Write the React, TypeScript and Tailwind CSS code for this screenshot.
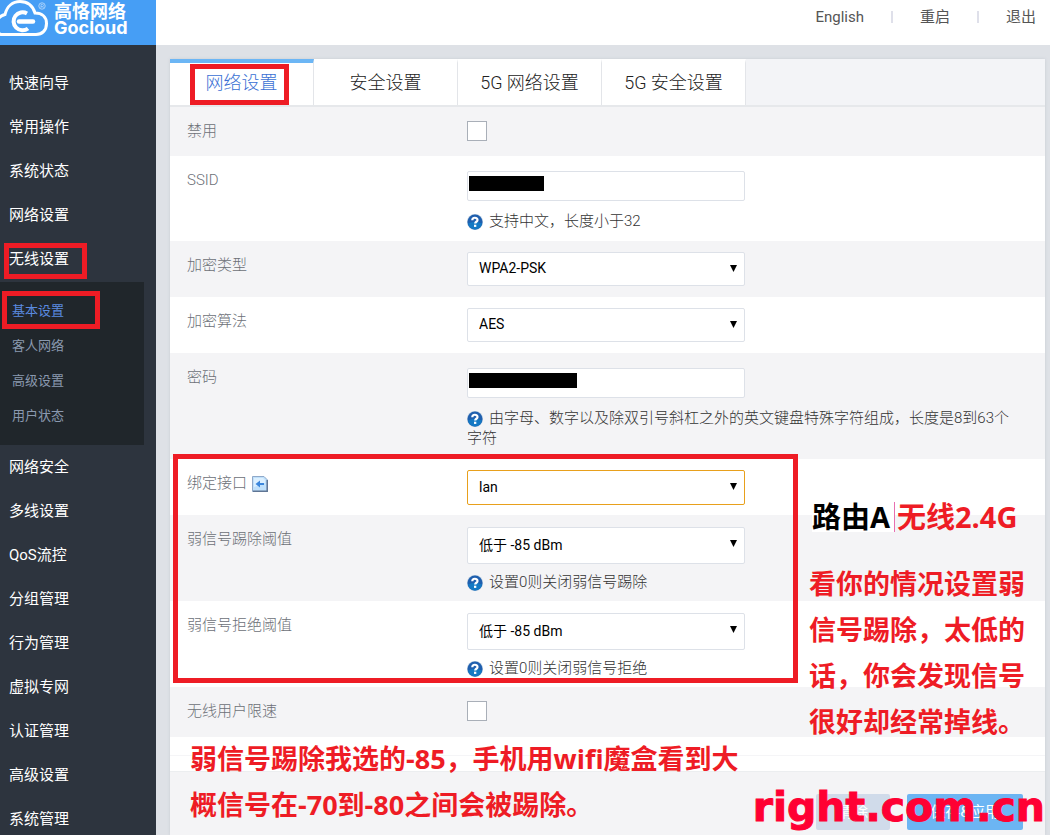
import { useState, type ReactNode } from 'react'

const MENU_TOP = ['快速向导', '常用操作', '系统状态', '网络设置', '无线设置']
const SUB_MENU = ['基本设置', '客人网络', '高级设置', '用户状态']
const MENU_BOTTOM = [
  '网络安全',
  '多线设置',
  'QoS流控',
  '分组管理',
  '行为管理',
  '虚拟专网',
  '认证管理',
  '高级设置',
  '系统管理',
]
const TABS = ['网络设置', '安全设置', '5G 网络设置', '5G 安全设置']

function Logo() {
  return (
    <a href="#" className="flex h-[45px] items-start bg-[#469ef5] text-white" aria-label="Gocloud">
      <svg width="50" height="45" viewBox="0 0 50 45" fill="none" className="shrink-0">
        <path
          d="M1 34.500C-6 32-6 17 5 14.500 7 6 13 1.500 20 1.500c8 0 13 5 15 11.500 7 0 11.500 4 11.500 10.500 0 7-4.500 11-10.500 11H1Z"
          stroke="white"
          strokeWidth="3"
        />
        <path d="M27 13.500A9 9 0 1 0 28 28.500" stroke="white" strokeWidth="4" />
        <path d="M19 21.500h14" stroke="white" strokeWidth="4.500" strokeLinecap="round" />
        <circle cx="42" cy="6" r="3.200" stroke="#a9d2fb" />
        <path d="M41 8V4.500h1.500a1 1 0 0 1 0 2H41m1.500 0L43.500 8" stroke="#a9d2fb" strokeWidth="0.8" />
      </svg>
      <span className="ml-1 flex flex-col">
        <span className="font-['Noto_Sans_CJK_SC',sans-serif] text-[18px] leading-[21px] font-bold">高恪网络</span>
        <span className="font-['Inter',sans-serif] text-[18px] leading-[14px] font-bold">Gocloud</span>
      </span>
    </a>
  )
}

function HelpIcon() {
  return (
    <svg width="16" height="16" viewBox="0 0 16 16" className="mr-[6px] inline-block align-[-4px]">
      <circle cx="8" cy="8" r="8" fill="#b4c9de" />
      <circle cx="8" cy="8" r="7.500" fill="#1f5fae" />
      <path d="M1 9.500a7.100 7.100 0 0 0 14 0Q8 6 1 9.500Z" fill="#1479c4" />
      <path d="M5.300 6.200c0-3.200 5.200-3.200 5.200-.2 0 1.800-2.300 1.700-2.300 3.500" fill="none" stroke="white" strokeWidth="2.200" />
      <rect x="7" y="10.700" width="2.300" height="2.200" fill="white" />
    </svg>
  )
}

function PageIcon() {
  return (
    <svg width="16" height="16" viewBox="0 0 16 16" className="ml-[5px] inline-block align-[-4px]">
      <path d="M.5.5H12L15.500 4v11.500H.5Z" fill="#bfe0fb" stroke="#8fa9c9" />
      <path d="M1 15.200h14.200V4" fill="none" stroke="#5f7594" strokeWidth="1.500" />
      <path d="M2 2h9l2 2v3L2 11Z" fill="#dcf0ff" />
      <path d="M3.500 8 8 4.500V7h4v2H8v2.500Z" fill="#3b86dc" />
    </svg>
  )
}

function Hint({ children }: { children: ReactNode }) {
  return (
    <p className="font-light text-[#333]">
      <HelpIcon />
      {children}
    </p>
  )
}

interface RowProps {
  id: string
  label: string
  size: string
  shaded?: boolean
  icon?: ReactNode
  children: ReactNode
}

function Row({ id, label, size, shaded, icon, children }: RowProps) {
  return (
    <div className={`flex pr-6 pl-[17px] ${size} ${shaded ? 'bg-[#f4f4f6]' : 'bg-white'}`}>
      <div className="w-[280px] shrink-0 pt-[14px] font-light text-[#6c7077]">
        <label htmlFor={id}>{label}</label>
        {icon}
      </div>
      <div className="min-w-0 flex-1">{children}</div>
    </div>
  )
}

function Checkbox({ id }: { id: string }) {
  return (
    <input
      id={id}
      type="checkbox"
      className="mt-[14px] block size-5 appearance-none border border-[#a9afb8] bg-white checked:bg-[#469ef5]"
    />
  )
}

function MaskedInput({ id, mask }: { id: string; mask: string }) {
  return (
    <div className="relative mt-[15px] mb-[10px] w-[278px]">
      <input id={id} className="block h-[30px] w-full rounded-xs border border-[#dde1e8] bg-white px-3" />
      <span className={`absolute top-[5px] left-[2px] h-[15px] bg-black ${mask}`} />
    </div>
  )
}

function Select({ id, value, style }: { id: string; value: string; style: string }) {
  return (
    <div className="relative mb-2 w-[278px]">
      <select
        id={id}
        className={`block w-full appearance-none rounded-xs border bg-white pr-8 pb-[2px] pl-[11px] text-[14px] text-black outline-none ${style}`}
      >
        <option>{value}</option>
      </select>
      <svg width="7" height="7" viewBox="0 0 7 7" className="pointer-events-none absolute top-[13px] right-[8px]">
        <path d="M0 0h7L3.500 7Z" />
      </svg>
    </div>
  )
}

// Red frame drawn over the screen to mark a control
function Mark({ place }: { place: string }) {
  return <span className={`pointer-events-none absolute z-10 border-5 border-[#ee1c25] ${place}`} />
}

export default function App() {
  const [tab, setTab] = useState(0)

  return (
    <div className="flex h-screen overflow-hidden bg-[#dee1e6] font-['Roboto','Noto_Sans_CJK_SC',sans-serif] text-[15px] leading-5">
      <aside className="w-[156px] shrink-0 bg-[#2d343e] text-white">
        <Logo />
        <nav className="pt-4">
          {MENU_TOP.map((item, i) => (
            <a key={item} href="#" className="relative flex h-11 items-center pl-[9px]">
              {item}
              {i === 4 && <Mark place="top-[6px] left-1 h-9 w-[83px]" />}
            </a>
          ))}
          <div className="mt-px mr-3 bg-[#20262b] pt-[11px] pb-3 text-[13px] text-[#8a99af]">
            {SUB_MENU.map((item, i) => (
              <a
                key={item}
                href="#"
                className={`relative flex h-[35px] items-center pl-3 ${i === 0 ? 'text-[#5b8be0]' : ''}`}
              >
                {item}
                {i === 0 && <Mark place="-top-[2px] left-[2px] h-[38px] w-[98px]" />}
              </a>
            ))}
          </div>
          {MENU_BOTTOM.map((item) => (
            <a key={item} href="#" className="flex h-11 items-center pl-[9px]">
              {item}
            </a>
          ))}
        </nav>
      </aside>

      <div className="flex min-w-0 flex-1 flex-col">
        <header className="flex h-[45px] shrink-0 items-start justify-end bg-white pt-[7px] pr-[14px] text-[#555]">
          <a href="#">English</a>
          <span className="mx-[27px] mt-1 h-3 w-[2px] bg-[#dfe0ea]" />
          <a href="#">重启</a>
          <span className="mx-[27px] mt-1 h-3 w-[2px] bg-[#dfe0ea]" />
          <a href="#">退出</a>
        </header>

        <main className="relative mt-[14px] mr-[5px] ml-[14px] flex flex-1 flex-col bg-[#f4f4f6] shadow-[0_0_3px_#c9cdd3]">
          <div role="tablist" className="flex h-12 shrink-0 border-b-2 border-[#e6e8eb] bg-[#f3f4f7] text-[18px]">
            {TABS.map((name, i) => (
              <button
                key={name}
                role="tab"
                aria-selected={i === tab}
                onClick={() => setTab(i)}
                className={`relative w-36 border-t-4 border-r border-r-[#e3e5e9] bg-white pb-[2px] font-light ${
                  i === tab ? 'border-t-[#6cb6f5] text-[#3a70d4]' : 'border-t-white text-[#222]'
                }`}
              >
                {name}
                {i === 0 && <Mark place="top-[1px] left-5 h-[41px] w-[99px]" />}
              </button>
            ))}
          </div>

          <form className="flex flex-1 flex-col">
            <Row id="disabled" label="禁用" size="h-[49px]" shaded>
              <Checkbox id="disabled" />
            </Row>
            <Row id="ssid" label="SSID" size="min-h-[85px]">
              <MaskedInput id="ssid" mask="w-[75px]" />
              <Hint>支持中文，长度小于32</Hint>
            </Row>
            <Row id="encryption" label="加密类型" size="min-h-[56px]" shaded>
              <Select id="encryption" value="WPA2-PSK" style="mt-[11px] h-[34px] border-[#dde1e8]" />
            </Row>
            <Row id="cipher" label="加密算法" size="min-h-[56px]">
              <Select id="cipher" value="AES" style="mt-[11px] h-[34px] border-[#dde1e8]" />
            </Row>
            <Row id="key" label="密码" size="min-h-[106px]" shaded>
              <MaskedInput id="key" mask="w-[108px]" />
              <Hint>由字母、数字以及除双引号斜杠之外的英文键盘特殊字符组成，长度是8到63个字符</Hint>
            </Row>

            <div className="relative">
              <Row id="iface" label="绑定接口" size="min-h-[56px]" icon={<PageIcon />}>
                <Select id="iface" value="lan" style="mt-[11px] h-[35px] border-[#e8a01c]" />
              </Row>
              <Row id="kick" label="弱信号踢除阈值" size="min-h-[86px]" shaded>
                <Select id="kick" value="低于 -85 dBm" style="mt-3 h-[37px] border-[#dde1e8]" />
                <Hint>设置0则关闭弱信号踢除</Hint>
              </Row>
              <Row id="reject" label="弱信号拒绝阈值" size="min-h-[86px]">
                <Select id="reject" value="低于 -85 dBm" style="mt-3 h-[37px] border-[#dde1e8]" />
                <Hint>设置0则关闭弱信号拒绝</Hint>
              </Row>
              <Mark place="-top-[5px] left-[3px] h-[229px] w-[625px]" />
            </div>

            <Row id="limit" label="无线用户限速" size="h-[50px]" shaded>
              <Checkbox id="limit" />
            </Row>
            <div className="h-[18px] bg-white" />
            <div className="h-[17px] border-t border-b border-t-[#f5f5f7] border-b-[#eceef0] bg-white" />

            <div className="flex justify-end gap-[17px] pt-[22px] pr-[22px] text-[15px] text-white">
              <button type="reset" className="h-9 w-[74px] rounded-xs bg-[#d0dbea]">
                清除
              </button>
              <button type="submit" className="h-9 w-[116px] rounded-xs bg-[#6cb5f3]">
                保存&amp;应用
              </button>
            </div>
          </form>

          {/* notes written over the page */}
          <div className="pointer-events-none absolute inset-0 font-['Open_Sans','Noto_Sans_CJK_SC',sans-serif] text-[27px] leading-[46px] font-bold text-[#ee1c25]">
            <p className="absolute top-[443px] left-[642px] flex text-[29px] leading-[30px] whitespace-nowrap">
              <span className="mr-[2px] border-r border-[#e86fb0] bg-white pr-1 text-black">路由A</span>
              无线2.4G
            </p>
            <p className="absolute top-[502px] left-[639px] w-[218px]">看你的情况设置弱信号踢除，太低的话，你会发现信号很好却经常掉线。</p>
            <p className="absolute top-[677px] left-5 w-[564px]">
              弱信号踢除我选的-85，手机用wifi魔盒看到大概信号在-70到-80之间会被踢除。
            </p>
            <p className="absolute top-[725px] right-0 font-['DejaVu_Sans',sans-serif] text-[41px] text-[#ff0033] [-webkit-text-stroke:1px_#ff0033]">
              right.com.cn
            </p>
          </div>
        </main>
      </div>
    </div>
  )
}
